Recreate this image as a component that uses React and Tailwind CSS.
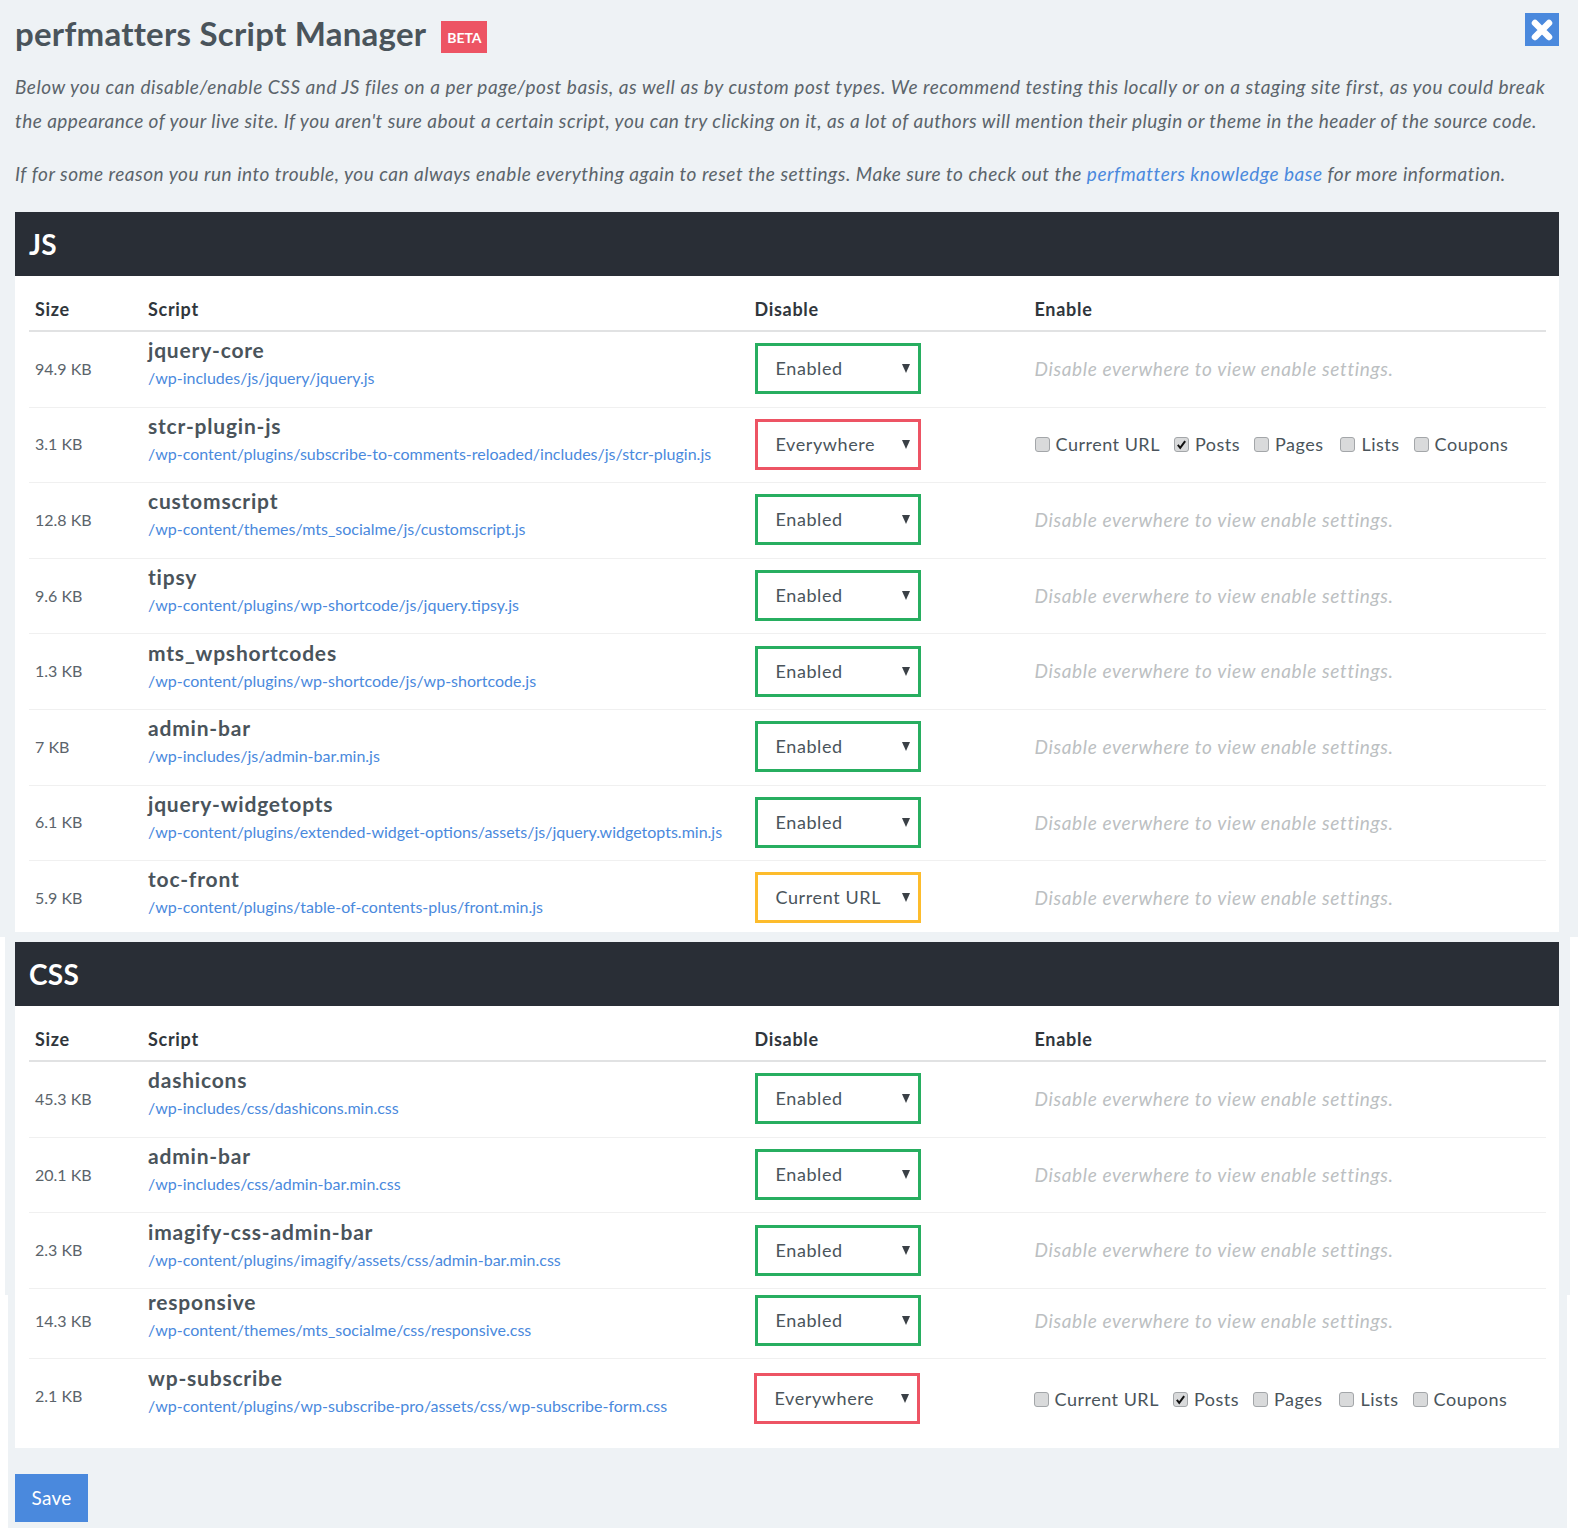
const FONT = "font-['Lato','Noto_Sans',sans-serif]";

const JS_ROWS = [
  { size: '94.9 KB', name: 'jquery-core', path: '/wp-includes/js/jquery/jquery.js', status: 'Enabled' },
  { size: '3.1 KB', name: 'stcr-plugin-js', path: '/wp-content/plugins/subscribe-to-comments-reloaded/includes/js/stcr-plugin.js', status: 'Everywhere' },
  { size: '12.8 KB', name: 'customscript', path: '/wp-content/themes/mts_socialme/js/customscript.js', status: 'Enabled' },
  { size: '9.6 KB', name: 'tipsy', path: '/wp-content/plugins/wp-shortcode/js/jquery.tipsy.js', status: 'Enabled' },
  { size: '1.3 KB', name: 'mts_wpshortcodes', path: '/wp-content/plugins/wp-shortcode/js/wp-shortcode.js', status: 'Enabled' },
  { size: '7 KB', name: 'admin-bar', path: '/wp-includes/js/admin-bar.min.js', status: 'Enabled' },
  { size: '6.1 KB', name: 'jquery-widgetopts', path: '/wp-content/plugins/extended-widget-options/assets/js/jquery.widgetopts.min.js', status: 'Enabled' },
  { size: '5.9 KB', name: 'toc-front', path: '/wp-content/plugins/table-of-contents-plus/front.min.js', status: 'Current URL', variant: 'cut' },
];

const CSS_ROWS = [
  { size: '45.3 KB', name: 'dashicons', path: '/wp-includes/css/dashicons.min.css', status: 'Enabled' },
  { size: '20.1 KB', name: 'admin-bar', path: '/wp-includes/css/admin-bar.min.css', status: 'Enabled' },
  { size: '2.3 KB', name: 'imagify-css-admin-bar', path: '/wp-content/plugins/imagify/assets/css/admin-bar.min.css', status: 'Enabled' },
  { size: '14.3 KB', name: 'responsive', path: '/wp-content/themes/mts_socialme/css/responsive.css', status: 'Enabled', variant: 'short' },
  { size: '2.1 KB', name: 'wp-subscribe', path: '/wp-content/plugins/wp-subscribe-pro/assets/css/wp-subscribe-form.css', status: 'Everywhere', variant: 'last' },
];

const OUTER = {
  cut: 'h-[70.4px]',
  short: 'h-[70.4px] border-b border-[#f0f0f0]',
  last: 'h-[89px]',
};

const BORDERS = {
  Enabled: 'border-[#27ae60]',
  Everywhere: 'border-[#ed5464]',
  'Current URL': 'border-[#fdbc2c]',
};

const GRID = 'grid grid-cols-[113px_606.5px_280px_1fr] px-[6px]';

function StatusSelect({ status, last }) {
  return (
    <div className={`flex h-[51px] w-[166px] items-center justify-between border-[3px] pl-[18px] pr-[8px] text-[18px] tracking-[0.6px] text-[#4a545b] ${BORDERS[status]} ${last ? '-ml-px mt-[5px]' : ''}`}>
      <span>{status}</span>
      <svg viewBox="0 0 8 9" className="h-[9px] w-[8px]">
        <path d="M0 0 H8 L4 9 Z" fill="#3a4046" />
      </svg>
    </div>
  );
}

function Checkbox({ label, checked, className = '' }) {
  return (
    <label className={`flex items-center gap-[6px] ${className}`}>
      <span className="flex h-[15px] w-[15px] items-center justify-center rounded-[3px] border border-[#a3a6a9] bg-[#d9dadb]">
        {checked && (
          <svg viewBox="0 0 12 12" className="h-[11px] w-[11px]">
            <path d="M2 6.5 L4.6 9.6 L10 2.4" fill="none" stroke="#111" strokeWidth="2.2" />
          </svg>
        )}
      </span>
      {label}
    </label>
  );
}

function EnableCell({ status, last }) {
  if (status !== 'Everywhere') {
    return <div className="mt-px text-[19px] italic tracking-[0.65px] text-[#bcbfc2]">Disable everwhere to view enable settings.</div>;
  }
  return (
    <div className={`flex items-center gap-[14px] text-[18px] tracking-[0.5px] text-[#4a545b] ${last ? '-ml-px mt-[7px]' : 'mt-px'}`}>
      <Checkbox label="Current URL" />
      <Checkbox label="Posts" checked />
      <Checkbox label="Pages" className="mr-[3px]" />
      <Checkbox label="Lists" />
      <Checkbox label="Coupons" />
    </div>
  );
}

function Row({ row, border }) {
  const outer = OUTER[row.variant] || `h-[75.6px] ${border ? 'border-b border-[#f0f0f0]' : ''}`;
  return (
    <div className={`flow-root ${outer}`}>
      <div className={`${GRID} h-[75.6px] items-center ${row.variant === 'short' ? '-mt-[6px]' : '-mt-px'}`}>
        <div className="text-[16px] text-[#5b646b]">{row.size}</div>
        <div className="pb-[10px]">
          <div className="text-[21px] font-bold leading-[28px] tracking-[0.8px] text-[#4a545b]">{row.name}</div>
          <a className="block text-[16px] leading-[27px] text-[#4a89dd]">{row.path}</a>
        </div>
        <StatusSelect status={row.status} last={row.variant === 'last'} />
        <EnableCell status={row.status} last={row.variant === 'last'} />
      </div>
    </div>
  );
}

function Section({ title, rows }) {
  return (
    <section>
      <h2 className="flex h-[64px] items-center bg-[#292e36] pb-px pl-[14px] text-[28px] font-bold tracking-[0.3px] text-white">{title}</h2>
      <div className="bg-white pl-[14px] pr-[13px]">
        <div className={`${GRID} h-[56px] items-end border-b-2 border-[#e1e2e3] pb-[8px] text-[18px] font-bold leading-[26px] tracking-[0.7px] text-[#30363c]`}>
          <div>Size</div>
          <div>Script</div>
          <div>Disable</div>
          <div>Enable</div>
        </div>
        {rows.map((row, i) => (
          <Row key={row.name} row={row} border={i < rows.length - 1} />
        ))}
      </div>
    </section>
  );
}

export default function App() {
  return (
    <div className={`relative min-h-[1528px] overflow-hidden bg-white ${FONT}`}>
      {/* stepped page background */}
      <div className="absolute inset-0">
        <div className="h-[937px] bg-[#eef2f5]" />
        <div className="ml-[5px] mr-[8px] h-[358px] bg-[#eef2f5]" />
        <div className="ml-[8px] mr-[11px] h-[233px] bg-[#eef2f5]" />
      </div>

      <div className="relative pl-[15px] pr-[19px]">
        <header className="relative flex h-[70px] items-start">
          <h1 className="mt-[11px] text-[33px] font-bold leading-[44px] tracking-[0.25px] text-[#4a545b]">perfmatters Script Manager</h1>
          <span className="ml-[15px] mt-[21px] flex h-[32px] w-[46px] items-center justify-center bg-[#ed5464] text-[14px] font-bold text-white">BETA</span>
          <button className="absolute right-0 top-[13px] flex h-[33px] w-[34px] items-center justify-center bg-[#4a89dd]">
            <svg viewBox="0 0 24 24" className="h-[24px] w-[24px]">
              <path d="M5 5 L19 19 M19 5 L5 19" stroke="#fff" strokeWidth="6.5" strokeLinecap="round" />
            </svg>
          </button>
        </header>

        <div className="text-[19px] italic leading-[34px] text-[#5b646b]">
          <p className="tracking-[0.55px]">Below you can disable/enable CSS and JS files on a per page/post basis, as well as by custom post types. We recommend testing this locally or on a staging site first, as you could break</p>
          <p className="tracking-[0.46px]">the appearance of your live site. If you aren't sure about a certain script, you can try clicking on it, as a lot of authors will mention their plugin or theme in the header of the source code.</p>
          <p className="mt-[19px] tracking-[0.52px]">
            If for some reason you run into trouble, you can always enable everything again to reset the settings. Make sure to check out the <a className="text-[#4a89dd]">perfmatters knowledge base</a> for more information.
          </p>
        </div>

        <div className="mt-[21px]">
          <Section title="JS" rows={JS_ROWS} />
        </div>
        <div className="mt-[10.6px]">
          <Section title="CSS" rows={CSS_ROWS} />
        </div>

        <button className="mt-[26px] flex h-[48px] w-[73px] items-center justify-center bg-[#4a89dd] pb-px text-[19px] tracking-[0.2px] text-white">Save</button>
      </div>
    </div>
  );
}
